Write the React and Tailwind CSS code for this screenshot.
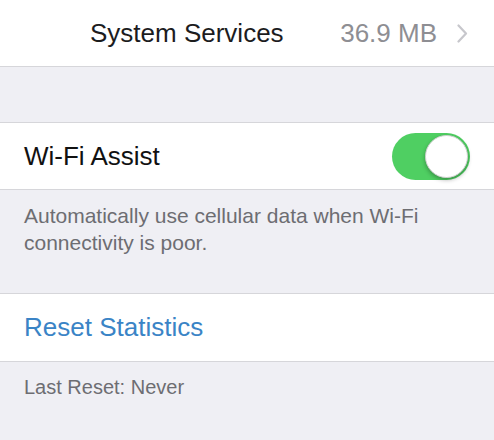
export default function App() {
  const font = { fontFamily: '"Liberation Sans", Arial, sans-serif' };
  return (
    <div className="w-[494px] h-[440px] bg-[#efeff4] overflow-hidden" style={font}>
      <div className="h-[67px] bg-white border-b border-[#d6d6da] flex items-center pl-[90px] pr-[26px]">
        <span className="text-[26px] text-[#1c1c1e] flex-1">System Services</span>
        <span className="text-[26px] text-[#8e8e93]">36.9 MB</span>
        <svg className="ml-[20px]" width="11" height="19" viewBox="0 0 11 19" fill="none">
          <path d="M1.5 1.5 L9 9.5 L1.5 17.5" stroke="#c7c7cc" strokeWidth="2.2" strokeLinecap="round" strokeLinejoin="round" />
        </svg>
      </div>

      <div className="h-[55px]" />

      <div className="h-[68px] bg-white border-y border-[#d6d6da] flex items-center pl-6 pr-6">
        <span className="text-[26px] text-[#111] flex-1">Wi-Fi Assist</span>
        <div className="w-[78px] h-[47px] rounded-full bg-[#4fcf62] relative">
          <div className="absolute right-[2px] top-[2px] w-[43px] h-[43px] rounded-full bg-white border border-[#d0d0d0] shadow-[0_2px_4px_rgba(0,0,0,0.3)]" />
        </div>
      </div>

      <div className="h-[103px] px-6 pt-3 text-[21px] leading-[27px] text-[#6d6d72]">
        Automatically use cellular data when Wi-Fi connectivity is poor.
      </div>

      <div className="h-[69px] bg-white border-y border-[#d6d6da] flex items-center pl-6">
        <span className="text-[26px] text-[#3a84c6]">Reset Statistics</span>
      </div>

      <div className="px-6 pt-3 text-[20px] leading-[27px] text-[#6d6d72]">
        Last Reset: Never
      </div>
    </div>
  );
}
